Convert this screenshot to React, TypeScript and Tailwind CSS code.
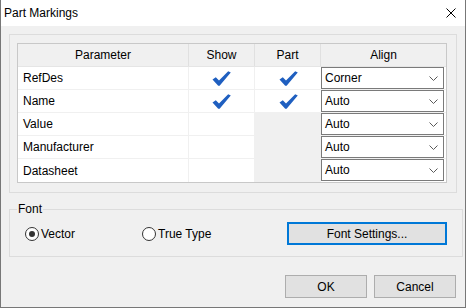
import React from 'react';

const rows = [
  { name: 'RefDes', show: true, part: true, align: 'Corner' },
  { name: 'Name', show: true, part: true, align: 'Auto' },
  { name: 'Value', show: false, part: null, align: 'Auto' },
  { name: 'Manufacturer', show: false, part: null, align: 'Auto' },
  { name: 'Datasheet', show: false, part: null, align: 'Auto' },
];

const Check = () => (
  <svg width="19" height="15" viewBox="0 0 19 15">
    <path d="M0.5 8.5 L3.8 6.2 L7 9.6 L16.2 0.3 L18.8 1.6 L7.6 14.8 L6.2 14.8 Z" fill="#1f5fc0" />
  </svg>
);

const Chevron = () => (
  <svg width="9" height="5" viewBox="0 0 9 5">
    <polyline points="0.5,0.5 4.5,4.5 8.5,0.5" fill="none" stroke="#5a5a5a" strokeWidth="1" />
  </svg>
);

const Select = ({ value }: { value: string }) => (
  <div className="w-[123px] h-[22px] bg-white border border-[#7a7a7a] flex items-center justify-between pl-[3px] pr-[5px]">
    <span>{value}</span>
    <Chevron />
  </div>
);

const Radio = ({ checked, label }: { checked: boolean; label: string }) => (
  <div className="flex items-center gap-[2px]">
    <div className="w-[14px] h-[14px] rounded-full border border-[#333333] bg-white flex items-center justify-center">
      {checked && <div className="w-[6px] h-[6px] rounded-full bg-[#333333]" />}
    </div>
    <span>{label}</span>
  </div>
);

export default function App() {
  return (
    <div className="w-[466px] h-[308px] bg-[#f0f0f0] border-x border-b border-[#777777] flex flex-col font-['Liberation_Sans',Arial,sans-serif] text-[12px] text-black">
      <div className="h-[26px] bg-white flex items-center justify-between pl-[3px] pr-[9px] shrink-0">
        <span className="text-[12px]">Part Markings</span>
        <svg width="10" height="10" viewBox="0 0 10 10">
          <path d="M0.5 0.5 L9.5 9.5 M9.5 0.5 L0.5 9.5" stroke="#000" strokeWidth="1" />
        </svg>
      </div>

      <div className="flex flex-col px-[8px] pt-[8px]">
        <div className="h-[159px] border border-[#dcdcdc] pl-[7px] pt-[8px]">
          <div className="w-[430px] border border-[#c8c8c8] bg-white">
            <div className="grid grid-cols-[171px_66px_66px_125px] h-[23px] bg-[#f0f0f0] border-b border-[#e5e5e5]">
              <div className="flex items-center justify-center border-r border-[#e0e0e0]">Parameter</div>
              <div className="flex items-center justify-center border-r border-[#e0e0e0]">Show</div>
              <div className="flex items-center justify-center border-r border-[#e0e0e0]">Part</div>
              <div className="flex items-center justify-center">Align</div>
            </div>
            {rows.map((r, i) => (
              <div
                key={r.name}
                className={`grid grid-cols-[171px_66px_66px_125px] h-[23px] ${i < rows.length - 1 ? 'border-b border-[#f0f0f0]' : ''}`}
              >
                <div className="flex items-center pl-[5px] border-r border-[#f0f0f0]">{r.name}</div>
                <div className="flex items-center justify-center border-r border-[#f0f0f0]">{r.show && <Check />}</div>
                <div className={`flex items-center justify-center ${r.part === null ? 'bg-[#f0f0f0]' : 'bg-white'}`}>
                  {r.part && <Check />}
                </div>
                <div className="flex items-start">
                  <Select value={r.align} />
                </div>
              </div>
            ))}
          </div>
        </div>

        <fieldset className="mt-[9px] h-[55px] border border-[#dcdcdc] px-[15px]">
          <legend className="ml-[-8px] px-[1px] leading-[14px]">Font</legend>
          <div className="flex items-center h-[23px] mt-[6px]">
            <div className="w-[117px]">
              <Radio checked label="Vector" />
            </div>
            <div className="w-[145px]">
              <Radio checked={false} label="True Type" />
            </div>
            <button className="w-[160px] h-[23px] bg-[#e1e1e1] border-2 border-[#0078d7] flex items-center justify-center">
              Font Settings...
            </button>
          </div>
        </fieldset>

        <div className="flex justify-end gap-[7px] mt-[18px] pr-[1px]">
          <button className="w-[82px] h-[23px] bg-[#e1e1e1] border border-[#adadad]">OK</button>
          <button className="w-[82px] h-[23px] bg-[#e1e1e1] border border-[#adadad]">Cancel</button>
        </div>
      </div>
    </div>
  );
}
